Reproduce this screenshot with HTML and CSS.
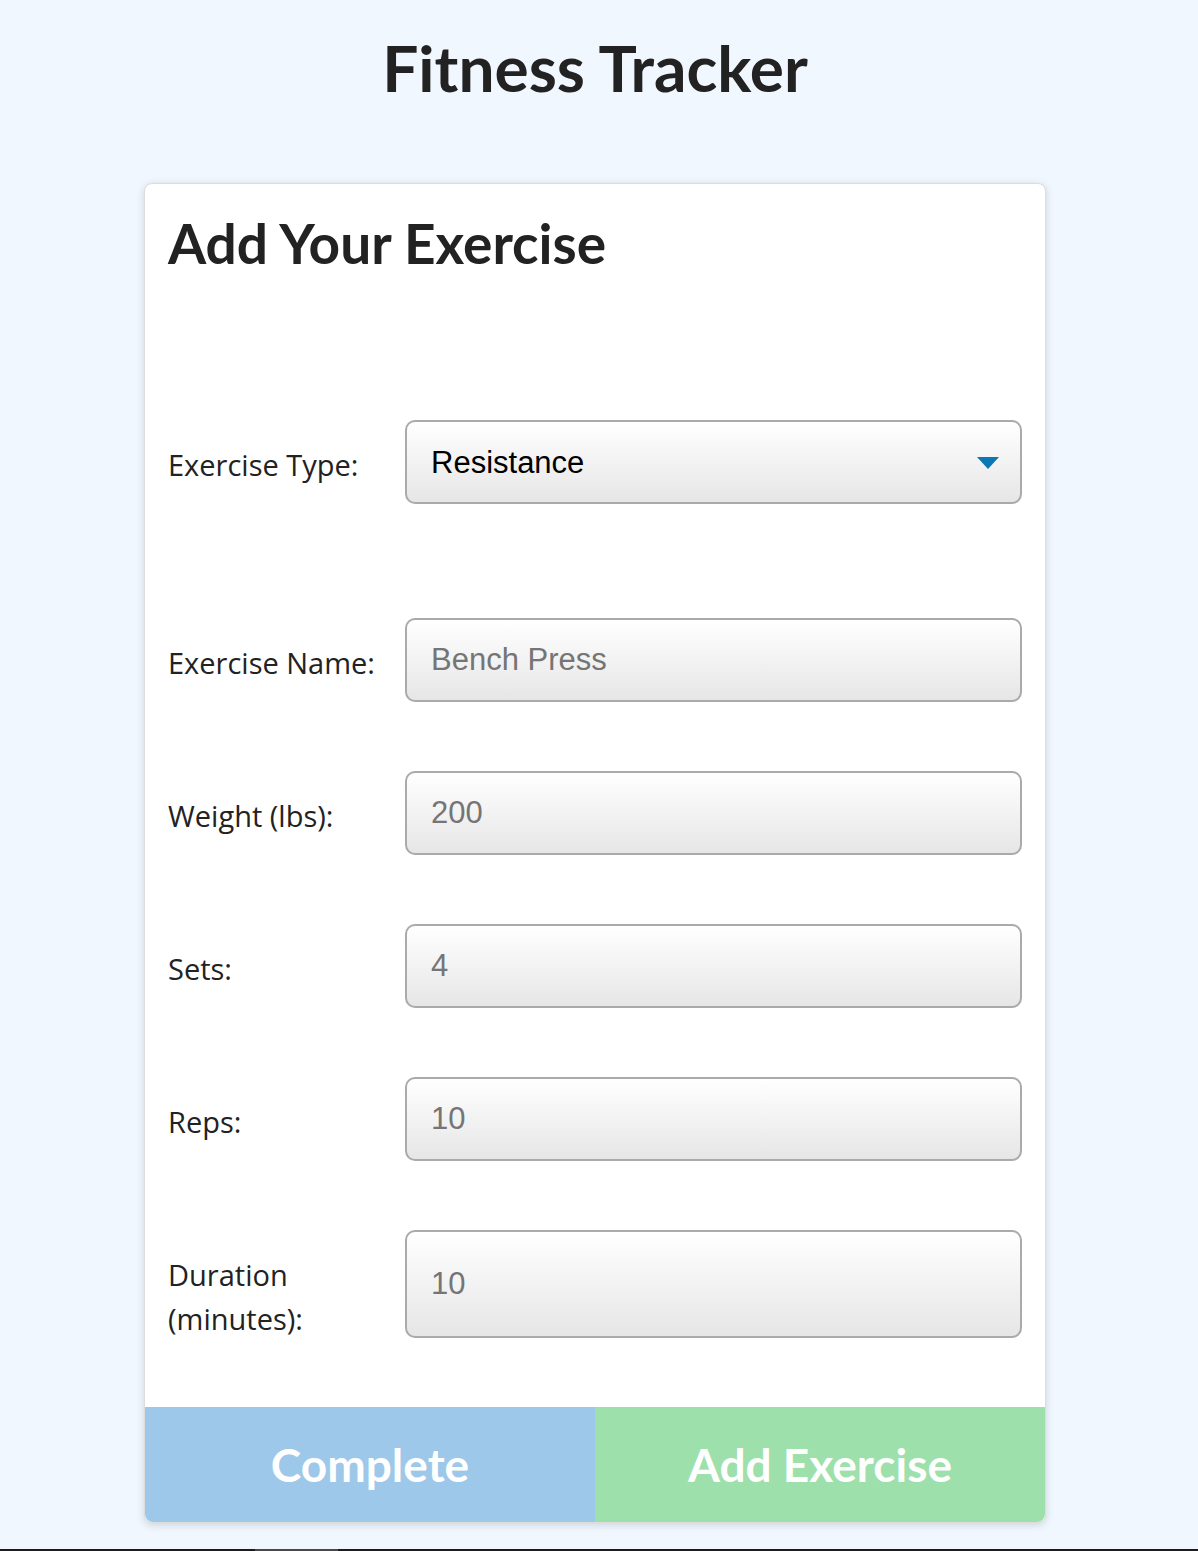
FILE: index.html
```html
<!DOCTYPE html>
<html lang="en">
<head>
  <meta charset="UTF-8">
  <meta name="viewport" content="width=device-width, initial-scale=1.0">
  <title>Fitness Tracker</title>
  <link rel="stylesheet" href="styles.css">
</head>
<body>

<div class="page">
  <h1>Fitness Tracker</h1>

  <div class="card">
    <h2>Add Your Exercise</h2>

    <form id="exerciseForm">
      <div class="row row-type">
        <label for="type">Exercise Type:</label>
        <div class="select-wrap">
          <select id="type">
            <option>Resistance</option>
            <option>Cardio</option>
          </select>
          <span class="arrow"></span>
        </div>
      </div>

      <div class="row">
        <label for="name">Exercise Name:</label>
        <input type="text" id="name" placeholder="Bench Press">
      </div>

      <div class="row">
        <label for="weight">Weight (lbs):</label>
        <input type="text" id="weight" placeholder="200">
      </div>

      <div class="row">
        <label for="sets">Sets:</label>
        <input type="text" id="sets" placeholder="4">
      </div>

      <div class="row">
        <label for="reps">Reps:</label>
        <input type="text" id="reps" placeholder="10">
      </div>

      <div class="row row-tall">
        <label for="duration">Duration (minutes):</label>
        <input type="text" id="duration" placeholder="10">
      </div>
    </form>

    <div class="actions">
      <button type="button" class="btn-complete">Complete</button>
      <button type="submit" form="exerciseForm" class="btn-add">Add Exercise</button>
    </div>
  </div>
</div>

<div class="bottom-bar"><span></span></div>

</body>
</html>
```

FILE: styles.css
```css
body {
  margin: 0;
  background-color: #f0f7ff;
  font-family: Lato, "Noto Sans", sans-serif;
  color: #222;
}
.page {
  padding: 31px 8px 0 0;
}
h1 {
  margin: 0 0 78px;
  text-align: center;
  font-size: 64px;
  line-height: 74px;
  font-weight: 700;
  color: #222;
}
.card {
  width: 900px;
  margin: 0 auto;
  background-color: #fff;
  border: 1px solid #dcdcdc;
  border-radius: 8px;
  box-shadow: 0 2px 8px rgba(0, 0, 0, 0.15);
}
h2 {
  margin: 0;
  padding: 28px 23px 0;
  font-size: 55px;
  line-height: 62px;
  font-weight: 700;
  color: #222;
}
form {
  padding: 146px 23px 69px;
}
.row {
  display: grid;
  grid-template-columns: 237px 617px;
  align-items: center;
  margin-bottom: 69px;
}
.row-type {
  margin-bottom: 114px;
}
.row:last-child {
  margin-bottom: 0;
}
label {
  font-family: "Open Sans", Lato, sans-serif;
  font-size: 29px;
  line-height: 44px;
  color: #222;
  margin-top: 6px;
}
.row-tall label {
  margin-top: 0;
  margin-bottom: -3px;
  align-self: end;
}
input, select {
  box-sizing: border-box;
  width: 100%;
  height: 84px;
  padding: 0 24px;
  border: 2px solid #aaa;
  border-radius: 10px;
  background: linear-gradient(#fff, #e6e6e6);
  font-family: "Liberation Sans", Arial, sans-serif;
  font-size: 31px;
  color: #000;
  appearance: none;
  outline: none;
}
.row-tall input {
  height: 108px;
}
input::placeholder {
  color: #757575;
}
.select-wrap {
  position: relative;
}
.arrow {
  position: absolute;
  right: 23px;
  top: 37px;
  width: 0;
  height: 0;
  border-left: 11px solid transparent;
  border-right: 11px solid transparent;
  border-top: 12px solid #0a78b4;
  pointer-events: none;
}
.actions {
  display: flex;
}
.actions button {
  flex: 1;
  height: 115px;
  border: none;
  color: #fff;
  font-family: Lato, sans-serif;
  font-size: 46px;
  font-weight: 700;
  cursor: pointer;
}
.btn-complete {
  background-color: #9dc8e9;
  border-radius: 0 0 0 8px;
}
.btn-add {
  background-color: #9ee0ab;
  border-radius: 0 0 8px 0;
}
.bottom-bar {
  margin-top: 26px;
  height: 3px;
  background-color: #1c1c1c;
}
.bottom-bar span {
  display: block;
  margin-left: 255px;
  width: 83px;
  height: 3px;
  background-color: #4a4a4a;
}
```
